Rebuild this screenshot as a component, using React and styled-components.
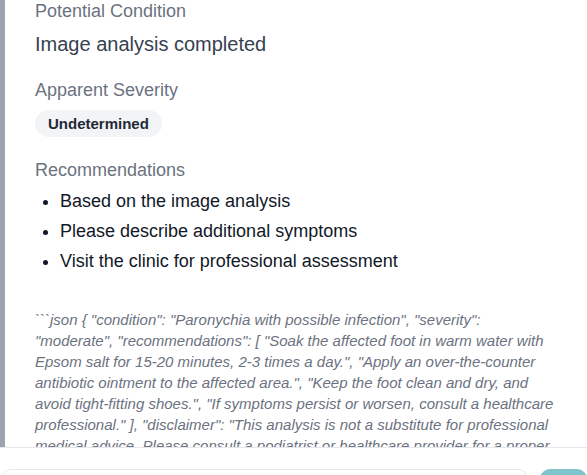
import React from "react";
import styled, { createGlobalStyle } from "styled-components";

const Global = createGlobalStyle`
  html, body { margin: 0; padding: 0; background: #ffffff; }
  body { font-family: "Liberation Sans", Arial, sans-serif; overflow: hidden; }
`;

const Page = styled.div`
  width: 587px;
  height: 475px;
  display: flex;
  flex-direction: column;
  overflow: hidden;
`;

const Messages = styled.div`
  flex: 1;
  min-height: 0;
  overflow: hidden;
`;

const Bubble = styled.div`
  border-left: 5px solid #9ca3af;
  padding: 0 33px 0 30px;
  margin-top: -2px;
  height: calc(100% + 2px);
  box-sizing: border-box;
`;

const Label = styled.div`
  font-size: 18px;
  line-height: 27px;
  color: #6b7280;
  margin-top: ${(p) => p.$mt || 0}px;
`;

const Value = styled.div`
  font-size: 20px;
  line-height: 30px;
  color: #374151;
  margin-top: 4px;
`;

const Badge = styled.span`
  display: inline-block;
  margin-top: 6px;
  padding: 0 13px;
  height: 27px;
  line-height: 27px;
  border-radius: 14px;
  background: #f3f4f6;
  color: #1f2937;
  font-weight: 700;
  font-size: 15px;
`;

const List = styled.ul`
  margin: 2px 0 0 0;
  padding-left: 25px;
  list-style: disc;
`;

const Item = styled.li`
  font-size: 18px;
  line-height: 30px;
  color: #111827;
`;

const Raw = styled.p`
  margin: 33px 0 0 0;
  font-style: italic;
  font-size: 15px;
  line-height: 21px;
  color: #6b7280;
`;

const Composer = styled.div`
  flex: none;
  border-top: 1px solid #e5e7eb;
  padding: 21px 0 0 1px;
  display: flex;
  gap: 12px;
  height: 6px;
`;

const Input = styled.div`
  flex: none;
  width: 527px;
  height: 44px;
  border: 1px solid #e5e7eb;
  border-radius: 10px;
  box-sizing: border-box;
  background: #ffffff;
`;

const SendButton = styled.div`
  flex: 1;
  height: 44px;
  border-radius: 10px;
  background: #7fc4cb;
`;

export default function App() {
  return (
    <Page>
      <Global />
      <Messages>
        <Bubble>
          <Label>Potential Condition</Label>
          <Value>Image analysis completed</Value>
          <Label $mt={18}>Apparent Severity</Label>
          <Badge>Undetermined</Badge>
          <Label $mt={20}>Recommendations</Label>
          <List>
            <Item>Based on the image analysis</Item>
            <Item>Please describe additional symptoms</Item>
            <Item>Visit the clinic for professional assessment</Item>
          </List>
          <Raw>
            ```json {"{"} "condition": "Paronychia with possible infection", "severity": "moderate",
            "recommendations": [ "Soak the affected foot in warm water with Epsom salt for 15-20
            minutes, 2-3 times a day.", "Apply an over-the-counter antibiotic ointment to the
            affected area.", "Keep the foot clean and dry, and avoid tight-fitting shoes.", "If
            symptoms persist or worsen, consult a healthcare professional." ], "disclaimer": "This
            analysis is not a substitute for professional medical advice. Please consult a
            podiatrist or healthcare provider for a proper diagnosis and treatment plan." {"}"} ```
          </Raw>
        </Bubble>
      </Messages>
      <Composer>
        <Input />
        <SendButton />
      </Composer>
    </Page>
  );
}
